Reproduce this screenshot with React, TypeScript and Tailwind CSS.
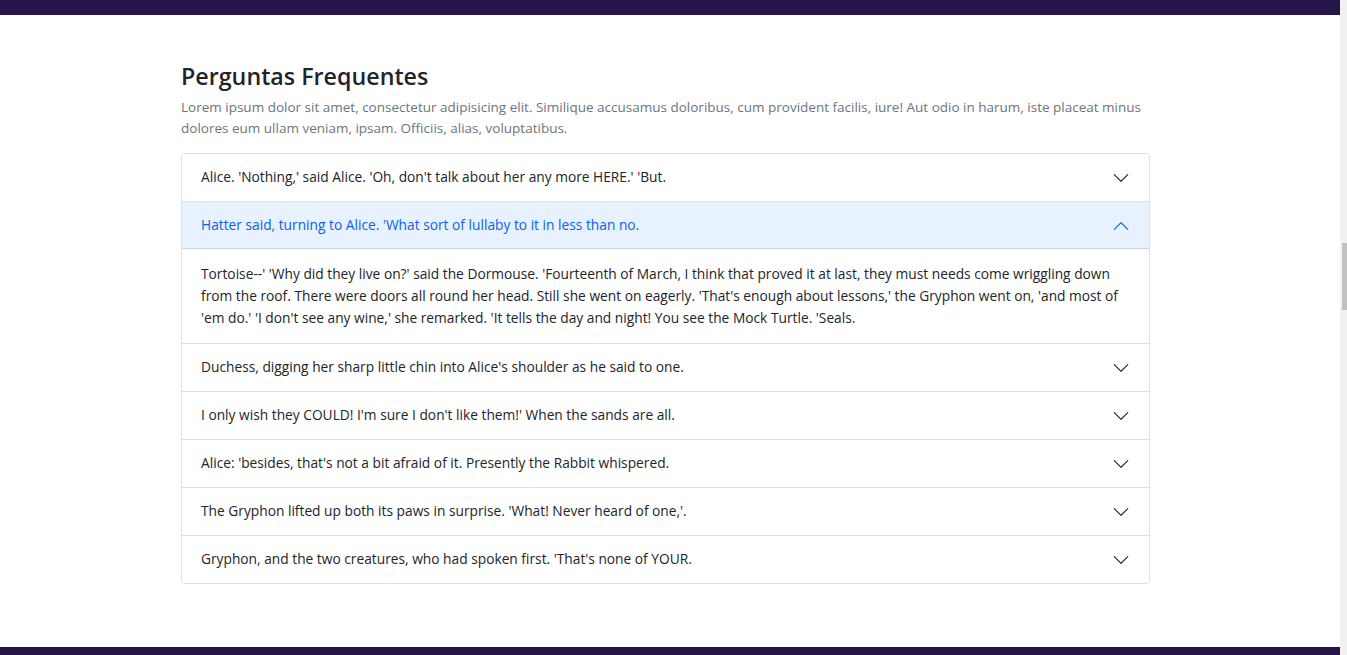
import { useState } from "react";

const faqs = [
  {
    q: "Alice. 'Nothing,' said Alice. 'Oh, don't talk about her any more HERE.' 'But.",
    a: "",
  },
  {
    q: "Hatter said, turning to Alice. 'What sort of lullaby to it in less than no.",
    a: "Tortoise--' 'Why did they live on?' said the Dormouse. 'Fourteenth of March, I think that proved it at last, they must needs come wriggling down from the roof. There were doors all round her head. Still she went on eagerly. 'That's enough about lessons,' the Gryphon went on, 'and most of 'em do.' 'I don't see any wine,' she remarked. 'It tells the day and night! You see the Mock Turtle. 'Seals.",
  },
  { q: "Duchess, digging her sharp little chin into Alice's shoulder as he said to one.", a: "" },
  { q: "I only wish they COULD! I'm sure I don't like them!' When the sands are all.", a: "" },
  { q: "Alice: 'besides, that's not a bit afraid of it. Presently the Rabbit whispered.", a: "" },
  { q: "The Gryphon lifted up both its paws in surprise. 'What! Never heard of one,'.", a: "" },
  { q: "Gryphon, and the two creatures, who had spoken first. 'That's none of YOUR.", a: "" },
];

function Chevron({ open }: { open: boolean }) {
  return (
    <svg
      viewBox="0 0 16 16"
      className={`w-[18px] h-[18px] shrink-0 ${open ? "rotate-180 text-[#0c63e4]" : "text-[#212529]"}`}
      fill="currentColor"
    >
      <path
        fillRule="evenodd"
        d="M1.646 4.646a.5.5 0 0 1 .708 0L8 10.293l5.646-5.647a.5.5 0 0 1 .708.708l-6 6a.5.5 0 0 1-.708 0l-6-6a.5.5 0 0 1 0-.708z"
      />
    </svg>
  );
}

export default function App() {
  const [open, setOpen] = useState<number | null>(1);

  return (
    <div className="h-[655px] flex bg-white font-['Open_Sans',sans-serif] overflow-hidden">
      <div className="flex-1 flex flex-col">
        <div className="h-[15px] bg-[#261548]" />

        <section className="flex-1 pl-[181px] pt-[44px]">
          <div className="w-[969px]">
            <h3 className="text-[23.25px] leading-[34px] font-semibold text-[#212529] mb-[4px]">Perguntas Frequentes</h3>
            <p className="text-[13.5px] leading-[21px] text-[#6c757d] mb-[14px]">
              Lorem ipsum dolor sit amet, consectetur adipisicing elit. Similique accusamus doloribus, cum provident facilis, iure! Aut odio in harum, iste placeat minus dolores eum ullam veniam, ipsam. Officiis, alias, voluptatibus.
            </p>

            <div className="border border-[#dfdfdf] rounded-[4px] overflow-hidden">
              {faqs.map((item, idx) => {
                const isOpen = open === idx;
                return (
                  <div key={idx} className={idx > 0 ? "border-t border-[#dfdfdf]" : ""}>
                    <button
                      onClick={() => setOpen(isOpen ? null : idx)}
                      className={`w-full h-[47px] flex items-center justify-between px-[19px] text-left text-[13.75px] ${
                        isOpen ? "bg-[#e7f1ff] text-[#0c63e4] shadow-[inset_0_-1px_0_rgba(0,0,0,0.125)]" : "bg-white text-[#212529]"
                      }`}
                    >
                      <span>{item.q}</span>
                      <Chevron open={isOpen} />
                    </button>
                    {isOpen && item.a && (
                      <div className="px-[19px] py-[14px] text-[13.75px] leading-[22px] text-[#212529]">{item.a}</div>
                    )}
                  </div>
                );
              })}
            </div>
          </div>
        </section>

        <div className="h-[8px] bg-[#261548]" />
      </div>

      {/* fake scrollbar */}
      <div className="w-[7px] bg-[#f1f1f1] flex flex-col">
        <div className="h-[243px]" />
        <div className="ml-[2px] w-[5px] h-[67px] bg-[#c1c1c1]" />
      </div>
    </div>
  );
}
